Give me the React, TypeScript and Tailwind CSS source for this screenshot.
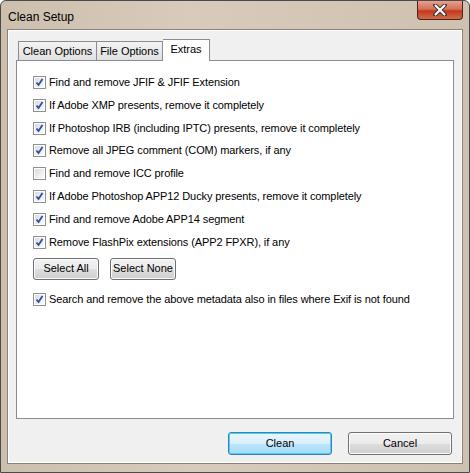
import React from 'react'

const options = [
  { label: 'Find and remove JFIF & JFIF Extension', checked: true },
  { label: 'If Adobe XMP presents, remove it completely', checked: true },
  { label: 'If Photoshop IRB (including IPTC) presents, remove it completely', checked: true },
  { label: 'Remove all JPEG comment (COM) markers, if any', checked: true },
  { label: 'Find and remove ICC profile', checked: false },
  { label: 'If Adobe Photoshop APP12 Ducky presents, remove it completely', checked: true },
  { label: 'Find and remove Adobe APP14 segment', checked: true },
  { label: 'Remove FlashPix extensions (APP2 FPXR), if any', checked: true },
]

function CheckBox({ checked }: { checked: boolean }) {
  return (
    <div className="w-[13px] h-[13px] border border-[#8f8f8f] bg-white p-[1px] shrink-0">
      <div className="w-full h-full bg-gradient-to-br from-[#dcdcdc] to-[#fbfbfb] flex items-center justify-center">
        {checked && (
          <svg width="9" height="9" viewBox="0 0 9 9">
            <path d="M1.5 4.5 L3.5 7 L7.5 1" fill="none" stroke="#2b4fa8" strokeWidth="1.8" />
          </svg>
        )}
      </div>
    </div>
  )
}

function Option({ label, checked }: { label: string; checked: boolean }) {
  return (
    <div className="flex items-center gap-[3px] h-[13px] whitespace-nowrap">
      <CheckBox checked={checked} />
      <span className="leading-none tracking-[-0.1px]">{label}</span>
    </div>
  )
}

function Btn({ children, width, primary }: { children: React.ReactNode; width: string; primary?: boolean }) {
  return (
    <div
      className={`${width} rounded-[3px] border flex items-center justify-center whitespace-nowrap ${
        primary
          ? 'border-[#3c7fb1] shadow-[inset_0_0_0_1px_#48d1f8] bg-[linear-gradient(#eaf6fd_0%,#d9f0fc_50%,#bee6fd_51%,#a7d9f5_100%)]'
          : 'border-[#707070] shadow-[inset_0_0_0_1px_#fcfcfc] bg-[linear-gradient(#f2f2f2_0%,#ebebeb_50%,#dddddd_51%,#cfcfcf_100%)]'
      }`}
    >
      {children}
    </div>
  )
}

export default function App() {
  return (
    <div
      className="w-[470px] h-[473px] flex flex-col text-[11px] text-black bg-[linear-gradient(90deg,#cdbfae_0%,#d8cbbb_40%,#cfc1b0_100%)] border border-[#4a4a4a] rounded-t-[6px] overflow-hidden"
      style={{ fontFamily: '"Liberation Sans", Arial, sans-serif' }}
    >
      <div className="h-[28px] flex items-start justify-between shrink-0">
        <span className="pl-[7px] pt-[7px] text-[12px]">Clean Setup</span>
        <div className="mr-[6px] w-[46px] h-[19px] rounded-b-[4px] border border-[#4a2418] border-t-0 bg-[linear-gradient(#e7a08c_0%,#d7705a_45%,#c0391d_55%,#d36a4a_100%)] flex items-center justify-center">
          <svg width="14" height="12" viewBox="0 0 14 12">
            <path d="M2 1 L12 11 M12 1 L2 11" stroke="#3a3a3a" strokeWidth="4" strokeLinecap="round" />
            <path d="M2.5 1.5 L11.5 10.5 M11.5 1.5 L2.5 10.5" stroke="#ffffff" strokeWidth="2" strokeLinecap="round" />
          </svg>
        </div>
      </div>

      <div className="mx-[6px] mb-[8px] flex-1 flex flex-col bg-[#f0f0f0] border border-[#8c8274] shadow-[inset_0_0_0_1px_#ffffff]">
        <div className="px-[8px] pt-[8px] flex items-end h-[30px] text-[11px]">
          <div className="ml-[2px] h-[19px] w-[79px] border border-[#898c95] border-b-0 bg-[linear-gradient(#f3f3f3,#e1e1e1)] flex items-center justify-center">Clean Options</div>
          <div className="h-[19px] w-[66px] border border-[#898c95] border-l-0 border-b-0 bg-[linear-gradient(#f3f3f3,#e1e1e1)] flex items-center justify-center">File Options</div>
          <div className="h-[22px] w-[47px] pb-[3px] border border-[#898c95] border-l-0 border-b-0 bg-white flex items-center justify-center -mb-px relative z-10">Extras</div>
        </div>
        <div className="mx-[8px] h-[359px] bg-white border border-[#898c95] pl-[16px] pt-[15px] flex flex-col">
          <div className="flex flex-col gap-[9.8px]">
            {options.map((o) => (
              <Option key={o.label} label={o.label} checked={o.checked} />
            ))}
          </div>
          <div className="flex gap-[11px] mt-[9px]">
            <Btn width="w-[66px] h-[22px]">Select All</Btn>
            <Btn width="w-[66px] h-[22px]">Select None</Btn>
          </div>
          <div className="mt-[13px]">
            <Option label="Search and remove the above metadata also in files where Exif is not found" checked />
          </div>
        </div>
        <div className="flex justify-end gap-[16px] pr-[10px] pt-[13px]">
          <Btn width="w-[104px] h-[23px]" primary>Clean</Btn>
          <Btn width="w-[104px] h-[23px]">Cancel</Btn>
        </div>
      </div>
    </div>
  )
}
